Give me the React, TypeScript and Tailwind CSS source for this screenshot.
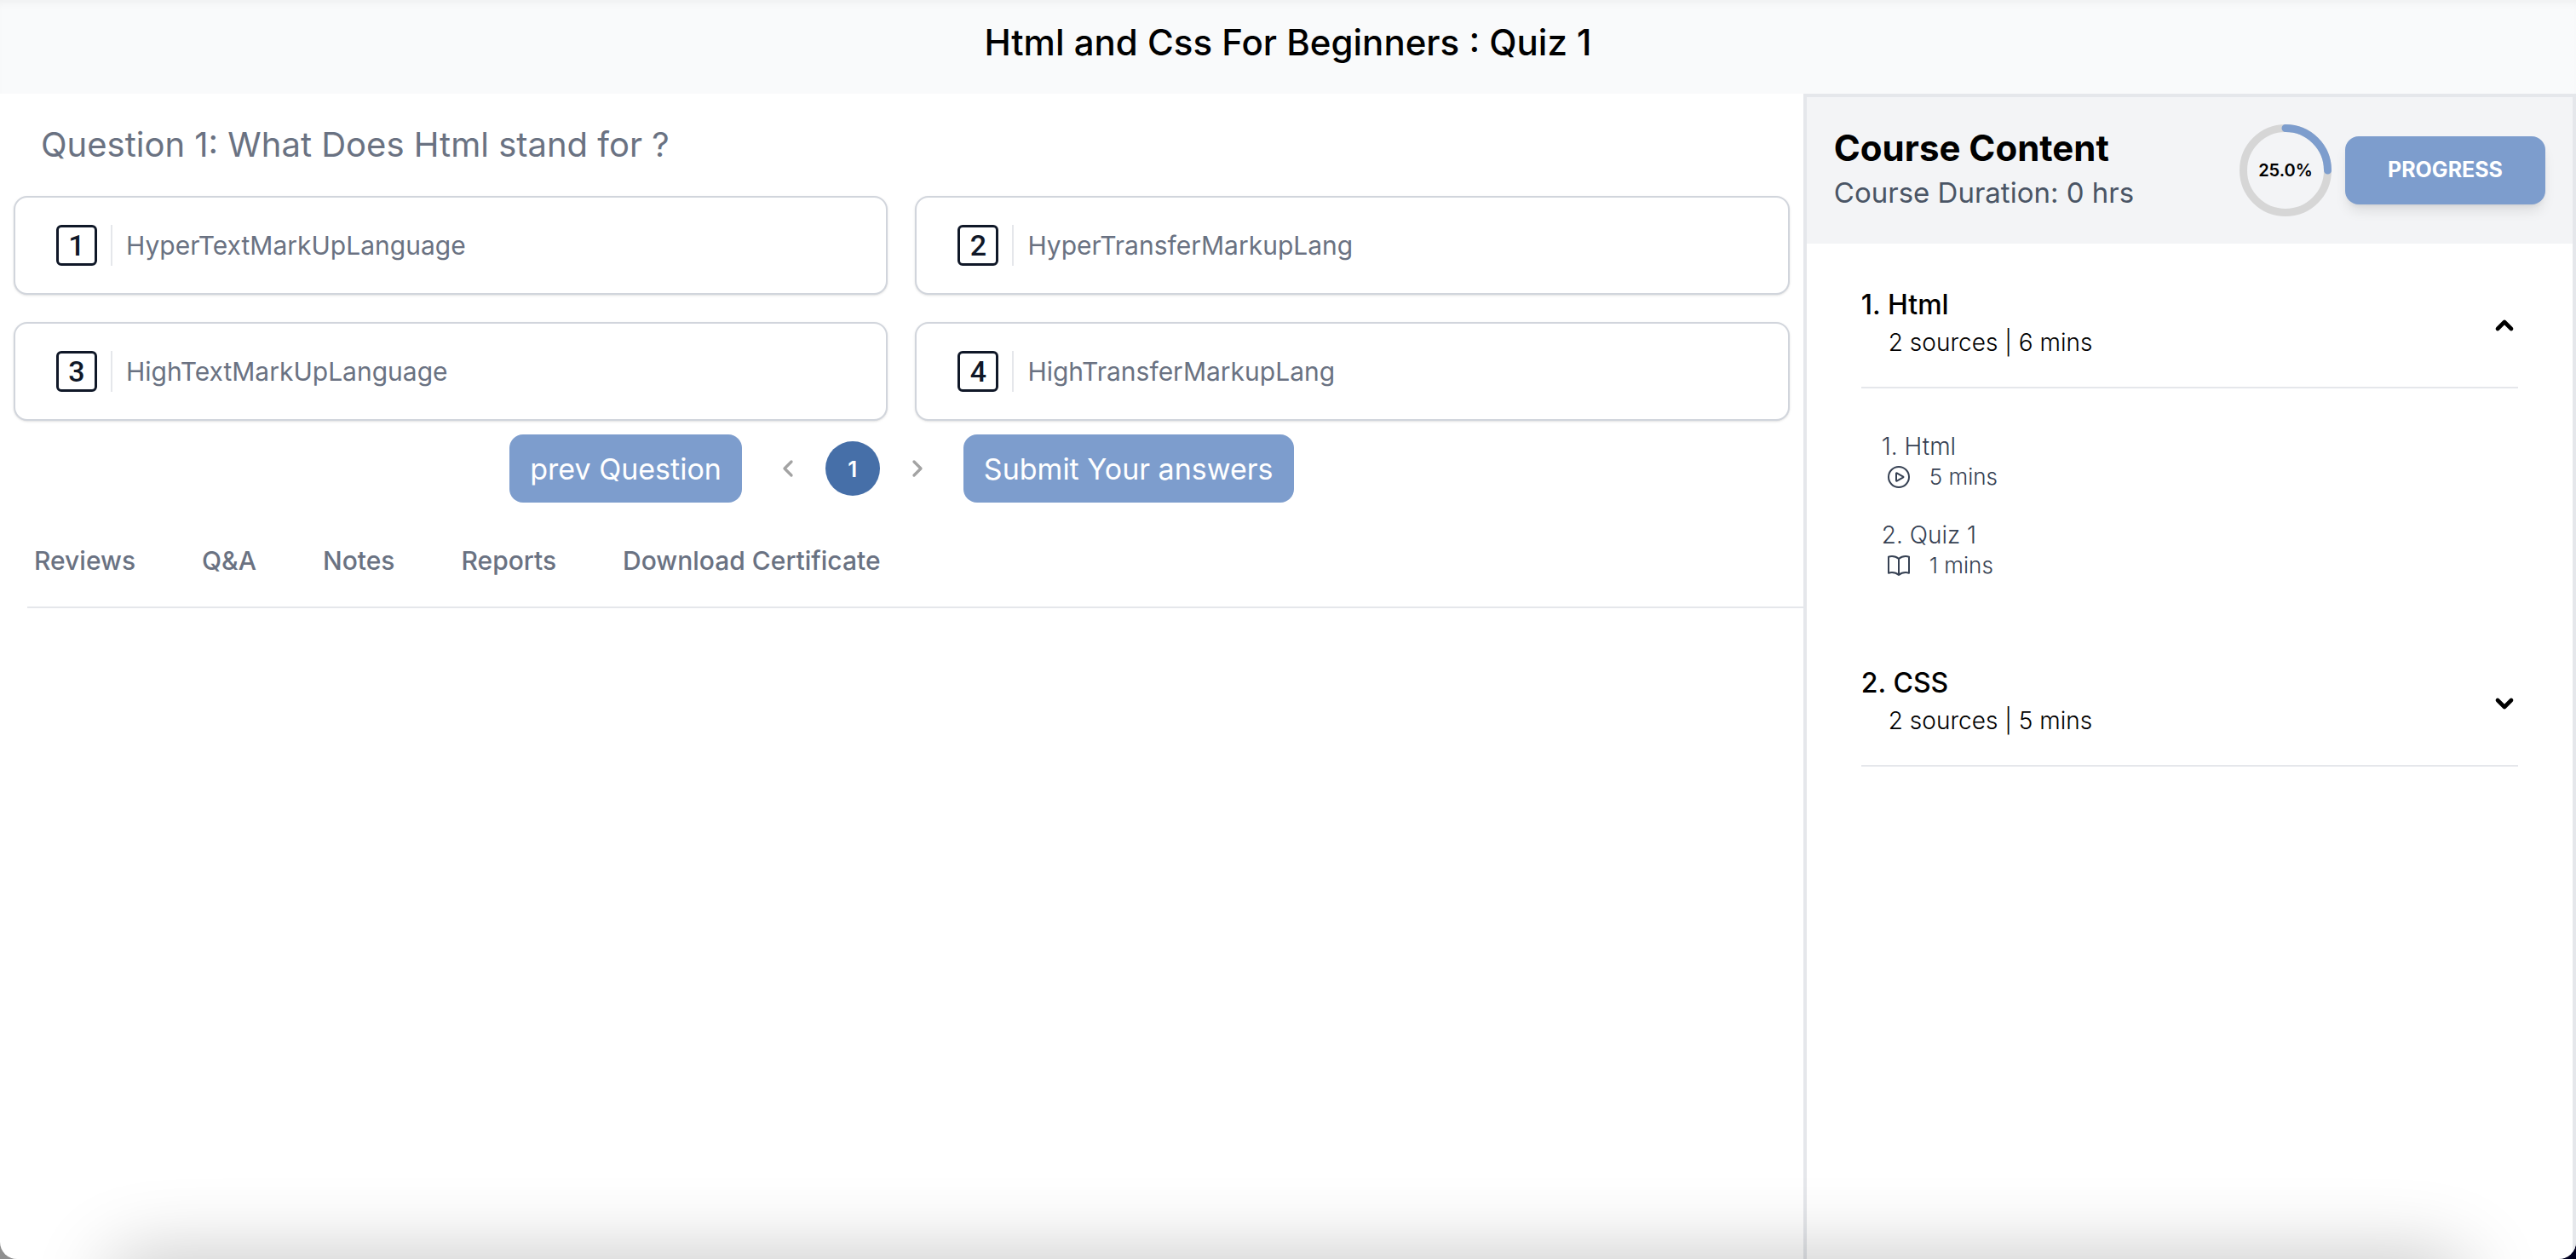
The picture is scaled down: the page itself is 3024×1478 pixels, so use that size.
import { HiOutlineBookOpen, HiOutlinePlayCircle } from "react-icons/hi2";
import { ChevronDown, ChevronLeft, ChevronRight, ChevronUp } from "lucide-react";

const options = [
  "HyperTextMarkUpLanguage",
  "HyperTransferMarkupLang",
  "HighTextMarkUpLanguage",
  "HighTransferMarkupLang",
];

const tabs = ["Reviews", "Q&A", "Notes", "Reports", "Download Certificate"];

const sections = [
  {
    title: "1. Html",
    meta: "2 sources | 6 mins",
    open: true,
    items: [
      { title: "1. Html", time: "5 mins", Icon: HiOutlinePlayCircle },
      { title: "2. Quiz 1", time: "1 mins", Icon: HiOutlineBookOpen },
    ],
  },
  { title: "2. CSS", meta: "2 sources | 5 mins", open: false, items: [] },
];

function ProgressRing({ percent }: { percent: number }) {
  const r = 49.5;
  const length = 2 * Math.PI * r;
  return (
    <div className="relative size-[108px] shrink-0">
      <svg viewBox="0 0 108 108" className="size-full -rotate-90" fill="none" aria-hidden="true">
        <circle cx="54" cy="54" r={r} stroke="#d6d6d6" strokeWidth="9" />
        <circle
          cx="54"
          cy="54"
          r={r}
          stroke="#7d9dcd"
          strokeWidth="9"
          strokeLinecap="round"
          strokeDasharray={`${(length * percent) / 100} ${length}`}
        />
      </svg>
      <span className="absolute inset-0 flex items-center justify-center text-[20px] font-semibold text-black">
        {percent.toFixed(1)}%
      </span>
    </div>
  );
}

function Option({ index, label }: { index: number; label: string }) {
  return (
    <button
      type="button"
      className="flex h-[116px] items-center rounded-2xl border-2 border-gray-300 bg-white px-12 text-left shadow-sm"
    >
      <span className="flex size-12 items-center justify-center rounded-md border-[3px] border-gray-900 font-[Roboto] text-[34px] font-medium text-gray-900">
        {index}
      </span>
      <span className="ml-4 h-12 border-l-2 border-gray-200 pl-4 text-[30px] leading-[48px] text-gray-500">
        {label}
      </span>
    </button>
  );
}

function Quiz() {
  return (
    <main className="w-[70%]">
      <h2 className="px-12 pt-9 pb-9 text-[40px] leading-[48px] text-gray-500">
        Question 1: What Does Html stand for ?
      </h2>
      <div className="grid grid-cols-2 gap-8 px-4">
        {options.map((label, i) => (
          <Option key={label} index={i + 1} label={label} />
        ))}
      </div>
      <div className="mt-4 flex items-center justify-center">
        <button type="button" className="h-20 rounded-2xl bg-[#7d9dcd] px-6 text-[34px] text-white">
          prev Question
        </button>
        <nav aria-label="Questions" className="mx-[38px] flex items-center gap-7">
          <button type="button" aria-label="Previous" className="text-[#a3a3a3]">
            <ChevronLeft className="size-8" strokeWidth={2.5} />
          </button>
          <button
            type="button"
            aria-current="page"
            className="size-16 rounded-full bg-[#466fa8] text-[26px] font-semibold text-white"
          >
            1
          </button>
          <button type="button" aria-label="Next" className="text-[#a3a3a3]">
            <ChevronRight className="size-8" strokeWidth={2.5} />
          </button>
        </nav>
        <button type="button" className="h-20 rounded-2xl bg-[#7d9dcd] px-6 text-[34px] text-white">
          Submit Your answers
        </button>
      </div>
      <div className="ml-8 flex gap-[78px] border-b-2 border-gray-200 px-2 pt-12 pb-[34px]">
        {tabs.map((tab) => (
          <button key={tab} type="button" className="text-[30px] leading-10 font-medium text-gray-500">
            {tab}
          </button>
        ))}
      </div>
    </main>
  );
}

function CourseContent() {
  return (
    <aside className="w-[30%] border-4 border-b-0 border-gray-200">
      <header className="flex items-center bg-gray-100 px-8 py-8">
        <div className="grow pb-1">
          <h2 className="text-[42px] leading-[56px] font-bold text-black">Course Content</h2>
          <p className="text-[33px] leading-[48px] text-gray-600">Course Duration: 0 hrs</p>
        </div>
        <ProgressRing percent={25} />
        <button
          type="button"
          className="ml-4 h-20 rounded-2xl bg-[#7d9dcd] px-[50px] text-[25px] font-bold text-white shadow-lg"
        >
          PROGRESS
        </button>
      </header>
      {sections.map(({ title, meta, open, items }) => {
        const Chevron = open ? ChevronUp : ChevronDown;
        return (
          <section key={title} className="px-16 pt-[50px]">
            <button
              type="button"
              aria-expanded={open}
              className="flex w-full items-center justify-between border-b-2 border-gray-200 pb-[30px] text-left text-black"
            >
              <span className="flex flex-col">
                <span className="text-[32px] leading-[44px] font-medium">{title}</span>
                <span className="pl-8 text-[28px] leading-[44px] font-light">{meta}</span>
              </span>
              <Chevron className="mt-1 size-8" strokeWidth={3.5} />
            </button>
            {items.length > 0 && (
              <ul className="flex flex-col gap-8 pt-12 pb-[50px] pl-6 font-light text-gray-700">
                {items.map(({ title: name, time, Icon }) => (
                  <li key={name}>
                    <a href="#" className="block">
                      <span className="block text-[28px] leading-10">{name}</span>
                      <span className="flex items-center gap-5 pl-1 text-[26px] leading-8">
                        <Icon className="size-8" />
                        {time}
                      </span>
                    </a>
                  </li>
                ))}
              </ul>
            )}
          </section>
        );
      })}
    </aside>
  );
}

export default function App() {
  return (
    <div className="relative min-h-screen overflow-hidden bg-linear-to-r from-[#8f8f8f] to-[#00001f] font-[Inter,sans-serif]">
      <div className="flex min-h-screen flex-col overflow-hidden rounded-b-[20px] bg-white">
        <header className="bg-gray-50 pt-[22px] pb-8 text-center shadow-[inset_0_8px_8px_-4px_rgba(0,0,0,0.04)]">
          <h1 className="text-[42px] leading-[56px] font-medium text-black">
            Html and Css For Beginners : Quiz 1
          </h1>
        </header>
        <div className="flex grow">
          <Quiz />
          <CourseContent />
        </div>
      </div>
      <div className="pointer-events-none absolute inset-x-32 top-full h-20 rounded-full shadow-[0_0_90px_4px_rgba(0,0,0,0.23)]" />
    </div>
  );
}
